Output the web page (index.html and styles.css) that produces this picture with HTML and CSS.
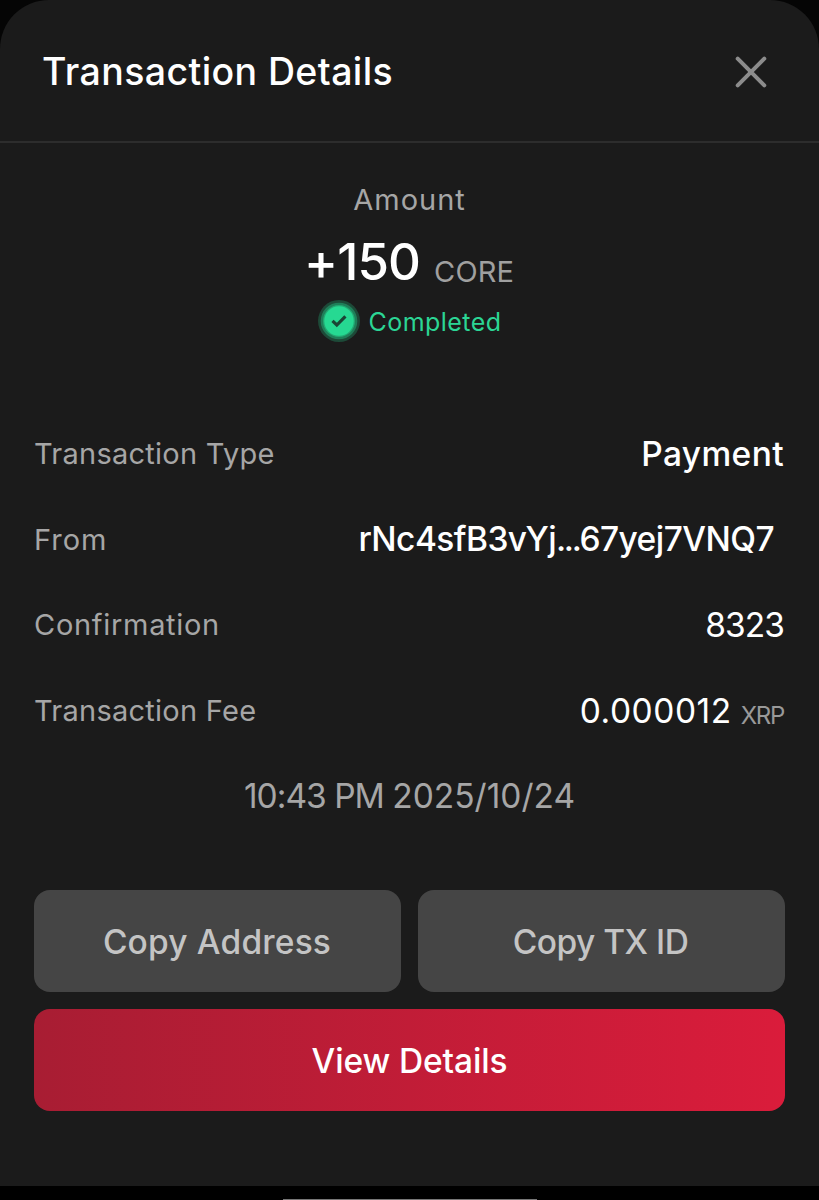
FILE: index.html
```html
<!DOCTYPE html>
<html lang="en">
<head>
<meta charset="utf-8">
<title>Transaction Details</title>
<link rel="stylesheet" href="styles.css">
</head>
<body>
<section class="sheet">
  <header class="header">
    <h1 class="title">Transaction Details</h1>
    <button class="close" aria-label="Close">
      <svg width="32" height="32" viewBox="0 0 32 32" fill="none" stroke="#8c8c8c" stroke-width="4" stroke-linecap="round"><path d="M2.7 2.7 29.3 29.3M29.3 2.7 2.7 29.3"/></svg>
    </button>
  </header>
  <main class="content">
    <div class="summary">
      <div class="summary-label">Amount</div>
      <div class="amount"><span class="amount-value">+150</span><span class="amount-unit">CORE</span></div>
      <div class="status">
        <svg width="42" height="42" viewBox="0 0 42 42"><circle cx="21" cy="21" r="21" fill="#1d4a38"/><circle cx="21" cy="21" r="18.3" fill="#1f7f59"/><circle cx="21" cy="21" r="16" fill="#23a973"/><circle cx="21" cy="21" r="14.7" fill="#26d992"/><path d="m14.5 20.9 4.3 4.1 8.6-8.7" fill="none" stroke="#1b4535" stroke-width="3.2"/></svg>
        <span class="status-text">Completed</span>
      </div>
    </div>
    <dl class="details">
      <div class="row"><dt class="label label-type">Transaction Type</dt><dd class="value value-payment">Payment</dd></div>
      <div class="row"><dt class="label label-from">From</dt><dd class="value value-address">rNc4sfB3vYj<span class="ellipsis">...</span>67yej7VNQ7</dd></div>
      <div class="row"><dt class="label label-confirmation">Confirmation</dt><dd class="value value-count">8323</dd></div>
      <div class="row"><dt class="label label-type">Transaction Fee</dt><dd class="value value-fee">0.000012<span class="unit">XRP</span></dd></div>
    </dl>
    <time class="date"><span class="clock">10:43 PM </span>2025/10/24</time>
    <div class="actions">
      <button class="button copy-address">Copy Address</button>
      <button class="button copy-id">Copy TX ID</button>
      <button class="button primary">View Details</button>
    </div>
  </main>
</section>
<footer class="system-bar"><div class="home-indicator"></div></footer>
</body>
</html>
```
FILE: styles.css
```css
* { box-sizing: border-box; }
body {
  margin: 0;
  height: 1200px;
  overflow: hidden;
  background: #050505;
  color: #fff;
  font-family: Inter, "Liberation Sans", sans-serif;
  display: flex;
  flex-direction: column;
}
button { border: 0; padding: 0; background: none; font: inherit; color: inherit; }
svg { display: block; flex: none; }

.sheet {
  height: 1186px;
  background: #1b1b1b;
  border-radius: 49px 49px 0 0;
}
.header {
  height: 143px;
  padding: 0 52px 0 42px;
  border-bottom: 2px solid #2d2d2d;
  display: flex;
  align-items: center;
  justify-content: space-between;
}
.title {
  margin: 0;
  padding-top: 2px;
  font-size: 37.5px;
  font-weight: 500;
  letter-spacing: .4px;
}
.close { padding-top: 3px; }

.content { padding: 36px 34px 0; }
.summary { display: flex; flex-direction: column; align-items: center; }
.summary-label {
  font-size: 29px;
  line-height: 41px;
  letter-spacing: .98px;
  color: #a6a6a6;
}
.amount {
  display: flex;
  align-items: center;
  gap: 14px;
  margin-top: 11px;
  height: 61px;
}
.amount-value { font-size: 51px; font-weight: 500; letter-spacing: -.9px; }
.amount-unit { font-size: 29px; letter-spacing: .1px; padding-top: 19px; margin-right: 1px; color: #a0a0a0; }
.status { display: flex; align-items: center; gap: 9px; margin-top: 8px; }
.status-text { font-size: 25px; letter-spacing: .43px; padding-top: 1px; color: #2bd695; }

.details { margin: 69px 0 0; }
.row {
  height: 85.6px;
  display: flex;
  align-items: center;
  justify-content: space-between;
}
.label { font-size: 29px; color: #a6a6a6; }
.label-type { letter-spacing: .25px; }
.label-from { letter-spacing: 1px; }
.label-confirmation { letter-spacing: .7px; }
.value { margin: 0; padding-right: 1px; font-size: 33.5px; }
.value-payment { font-weight: 500; letter-spacing: .38px; }
.value-address { font-weight: 500; letter-spacing: -.55px; padding-right: 11px; }
.ellipsis { letter-spacing: -2.4px; }
.value-count { letter-spacing: -.95px; }
.value-fee { display: flex; align-items: center; letter-spacing: .54px; }
.unit { margin-left: 9px; padding-top: 9px; font-size: 24px; letter-spacing: -1.3px; color: #999; }
.date {
  display: block;
  height: 84.6px;
  line-height: 87.6px;
  text-align: center;
  font-size: 33.5px;
  letter-spacing: 0;
  color: #a6a6a6;
}
.clock { letter-spacing: -1px; }

.actions {
  margin-top: 52px;
  display: grid;
  grid-template-columns: 1fr 1fr;
  grid-auto-rows: 102px;
  gap: 17px;
}
.button {
  padding-top: 2px;
  border-radius: 16px;
  background: #454545;
  color: #c4c4c4;
  font-size: 33.5px;
  font-weight: 500;
}
.copy-address { letter-spacing: .18px; padding-right: 1px; }
.copy-id { letter-spacing: -.5px; padding-right: 2px; }
.primary {
  grid-column: 1 / -1;
  background: linear-gradient(90deg, #a81d33, #da1c3b);
  color: #fff;
  letter-spacing: -.12px;
}

.system-bar {
  height: 14px;
  background: #000;
  display: flex;
  justify-content: center;
  align-items: flex-end;
}
.home-indicator { width: 254px; height: 1px; background: #777; }
```
